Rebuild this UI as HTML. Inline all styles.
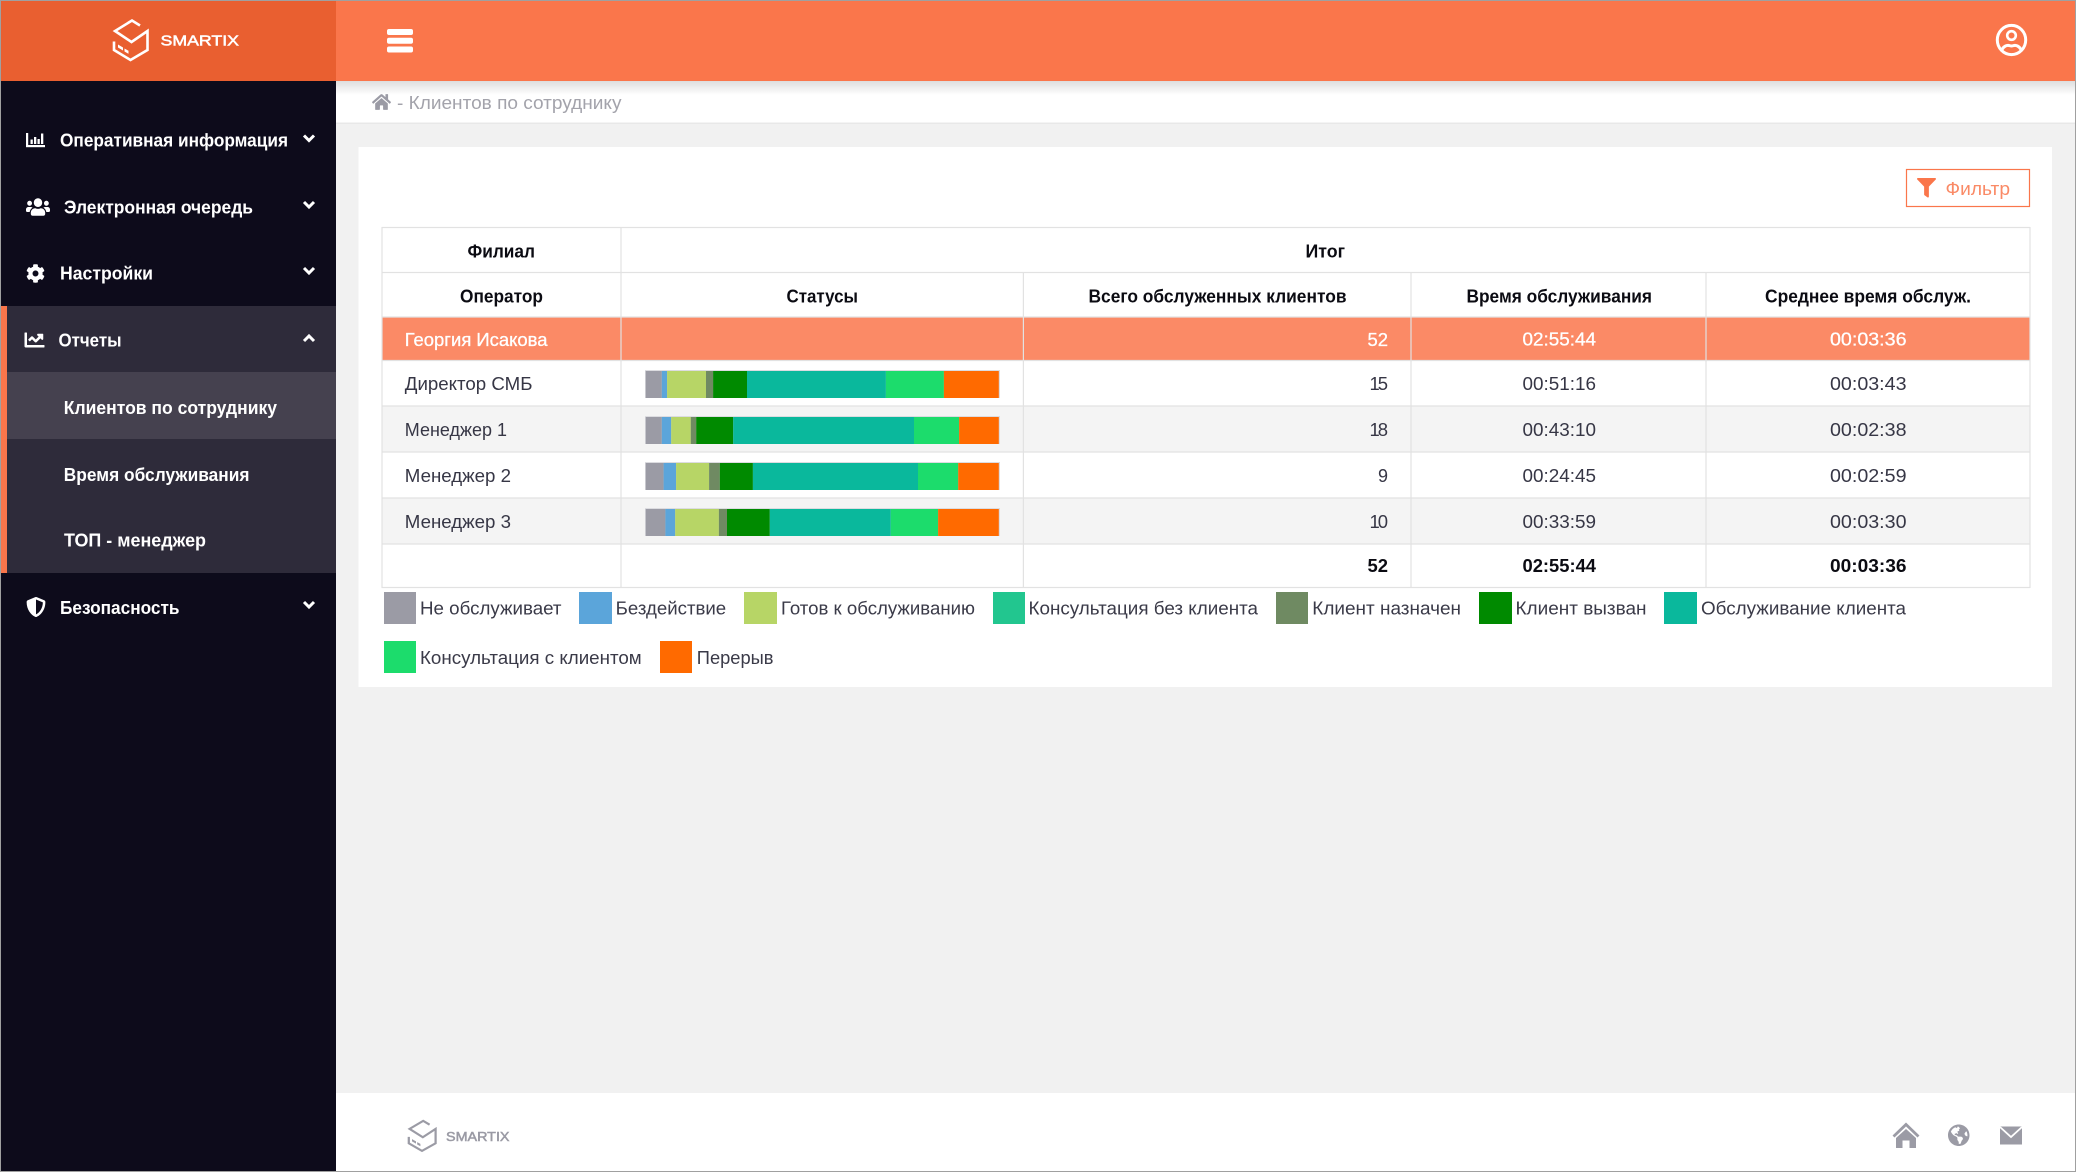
<!DOCTYPE html>
<html lang="ru">
<head>
<meta charset="utf-8">
<title>Клиентов по сотруднику</title>
<style>
html,body{margin:0;padding:0;width:2076px;height:1172px;overflow:hidden;background:#f1f1f1}
svg{display:block}
text{font-family:"Liberation Sans","Noto Sans CJK SC",sans-serif;font-size:18.5px}
.b{font-weight:700}
.w{fill:#fff}
.d{fill:#363645}
.k{fill:#0b0b12}
.l{fill:#3a3a48}
</style>
</head>
<body>
<svg xmlns="http://www.w3.org/2000/svg" width="2076" height="1172" viewBox="0 0 2076 1172">
<defs>
<linearGradient id="sh" x1="0" y1="0" x2="0" y2="1"><stop offset="0" stop-color="#000" stop-opacity=".13"/><stop offset="1" stop-color="#000" stop-opacity="0"/></linearGradient>
</defs>

<!-- page background -->
<rect x="0" y="0" width="2076" height="1172" fill="#f1f1f1"/>

<!-- breadcrumb -->
<rect x="336" y="81" width="1740" height="42" fill="#fff"/>
<rect x="336" y="122.5" width="1740" height="1.5" fill="#e8e8e8"/>
<rect x="336" y="81" width="1740" height="14" fill="url(#sh)"/>
<svg x="372" y="93" width="19" height="18" viewBox="0 0 576 512" preserveAspectRatio="none"><path fill="#9b9ba5" d="M280.37 148.26L96 300.11V464a16 16 0 0 0 16 16l112.06-.29a16 16 0 0 0 15.92-16V368a16 16 0 0 1 16-16h64a16 16 0 0 1 16 16v95.64a16 16 0 0 0 16 16.05L464 480a16 16 0 0 0 16-16V300L295.67 148.26a12.19 12.19 0 0 0-15.3 0zM571.6 251.47L488 182.56V44.05a12 12 0 0 0-12-12h-56a12 12 0 0 0-12 12v72.61L318.47 43a48 48 0 0 0-61 0L4.34 251.47a12 12 0 0 0-1.6 16.9l25.5 31A12 12 0 0 0 45.15 301l235.22-193.74a12.19 12.19 0 0 1 15.3 0L530.9 301a12 12 0 0 0 16.9-1.6l25.5-31a12 12 0 0 0-1.7-16.93z"/></svg>
<text x="397" y="109" textLength="224.5" lengthAdjust="spacingAndGlyphs" fill="#a3a3ab">- Клиентов по сотруднику</text>

<!-- top header -->
<rect x="336" y="0" width="1740" height="81" fill="#fa764b"/>
<rect x="387" y="29" width="26" height="6" rx="2" fill="#fff"/>
<rect x="387" y="37.7" width="26" height="6" rx="2" fill="#fff"/>
<rect x="387" y="46.5" width="26" height="6" rx="2" fill="#fff"/>
<ellipse cx="2011.5" cy="40" rx="14.2" ry="14.6" fill="none" stroke="#fff" stroke-width="3"/>
<circle cx="2011.5" cy="35.5" r="4.3" fill="none" stroke="#fff" stroke-width="2.6"/>
<path d="M2002 49.5c2-3.5 5-4.5 7-4 1.700.6 3.300.6 5 0 2-.5 5 .5 7 4" fill="none" stroke="#fff" stroke-width="3"/>

<!-- sidebar -->
<rect x="0" y="0" width="336" height="1172" fill="#0d0b1b"/>
<rect x="0" y="0" width="336" height="81" fill="#e95f30"/>
<g fill="none" stroke="#fff" stroke-width="2.6">
<path d="M140 25.5L132 20.5L115 31L131.5 42L147.5 31V50L130.5 60L114 50V41.5"/>
</g>
<path d="M118 44.5l5 3v3l-5-3zM124.5 48.5l4 2.300v3l-4-2.300z" fill="#fff"/>
<text x="160.5" y="45.5" textLength="78.5" lengthAdjust="spacingAndGlyphs" fill="#fff" style="font-size:14.5px" stroke="#fff" stroke-width=".5">SMARTIX</text>

<rect x="1" y="306" width="335" height="267" fill="#2e2b3a"/>
<rect x="7" y="372" width="329" height="67" fill="#45414f"/>
<rect x="1" y="306" width="6" height="267" fill="#fa764b"/>

<text class="b w" x="60" y="146.5" textLength="228" lengthAdjust="spacingAndGlyphs">Оперативная информация</text>
<text class="b w" x="64" y="213.5" textLength="189" lengthAdjust="spacingAndGlyphs">Электронная очередь</text>
<text class="b w" x="60" y="279.5" textLength="93" lengthAdjust="spacingAndGlyphs">Настройки</text>
<text class="b w" x="58.5" y="346.5" textLength="63" lengthAdjust="spacingAndGlyphs">Отчеты</text>
<text class="b w" x="63.8" y="414" textLength="213.2" lengthAdjust="spacingAndGlyphs">Клиентов по сотруднику</text>
<text class="b w" x="63.8" y="481" textLength="185.7" lengthAdjust="spacingAndGlyphs">Время обслуживания</text>
<text class="b w" x="64" y="546.5" textLength="142" lengthAdjust="spacingAndGlyphs">ТОП - менеджер</text>
<text class="b w" x="60" y="614" textLength="119.5" lengthAdjust="spacingAndGlyphs">Безопасность</text>

<!-- sidebar icons -->
<g fill="#fff">
<rect x="26" y="133" width="2.2" height="14"/><rect x="26" y="145" width="19" height="2.2"/>
<rect x="30.5" y="139.5" width="2.3" height="4.5"/><rect x="34" y="137" width="2.3" height="7"/><rect x="37.5" y="139" width="2.3" height="5"/><rect x="41" y="133.5" width="2.3" height="10.5"/>
</g>
<svg x="26" y="197" width="24" height="20" viewBox="0 0 640 512" preserveAspectRatio="none"><path fill="#fff" d="M96 224c35.300 0 64-28.700 64-64s-28.700-64-64-64-64 28.700-64 64 28.700 64 64 64zm448 0c35.300 0 64-28.700 64-64s-28.700-64-64-64-64 28.700-64 64 28.700 64 64 64zm32 32h-64c-17.600 0-33.500 7.100-45.100 18.600 40.300 22.100 68.900 62 75.100 109.400h66c17.700 0 32-14.300 32-32v-32c0-35.300-28.700-64-64-64zm-256 0c61.900 0 112-50.100 112-112S381.900 32 320 32 208 82.100 208 144s50.100 112 112 112zm76.800 32h-8.300c-20.800 10-43.900 16-68.500 16s-47.600-6-68.500-16h-8.300C179.600 288 128 339.600 128 403.200V432c0 26.500 21.500 48 48 48h288c26.500 0 48-21.500 48-48v-28.800c0-63.600-51.600-115.200-115.200-115.200zm-223.700-13.400C161.500 263.100 145.600 256 128 256H64c-35.300 0-64 28.700-64 64v32c0 17.700 14.300 32 32 32h65.900c6.300-47.400 34.900-87.300 75.200-109.400z"/></svg>
<svg x="26" y="264" width="19" height="19" viewBox="0 0 512 512"><path fill="#fff" d="M487.400 315.700l-42.600-24.600c4.300-23.200 4.300-47 0-70.200l42.600-24.600c4.900-2.800 7.100-8.600 5.500-14-11.100-35.600-30-67.800-54.700-94.600-3.800-4.100-10-5.100-14.800-2.300L380.800 110c-17.900-15.400-38.500-27.300-60.800-35.100V25.800c0-5.600-3.900-10.500-9.400-11.700-36.700-8.200-74.300-7.800-109.200 0-5.500 1.200-9.400 6.100-9.400 11.700V75c-22.200 7.900-42.800 19.800-60.800 35.100L88.700 85.500c-4.900-2.800-11-1.900-14.800 2.300-24.700 26.700-43.600 58.900-54.700 94.600-1.700 5.400.6 11.200 5.500 14L67.300 221c-4.300 23.200-4.300 47 0 70.200l-42.600 24.600c-4.900 2.800-7.100 8.600-5.500 14 11.100 35.600 30 67.800 54.700 94.600 3.800 4.100 10 5.100 14.800 2.300l42.600-24.600c17.900 15.400 38.500 27.300 60.800 35.100v49.200c0 5.600 3.900 10.500 9.400 11.700 36.700 8.200 74.300 7.800 109.200 0 5.500-1.200 9.400-6.100 9.400-11.700v-49.200c22.200-7.900 42.800-19.800 60.800-35.100l42.600 24.600c4.900 2.800 11 1.900 14.800-2.300 24.700-26.700 43.600-58.900 54.700-94.600 1.500-5.500-.7-11.300-5.600-14.100zM256 336c-44.100 0-80-35.900-80-80s35.900-80 80-80 80 35.900 80 80-35.900 80-80 80z"/></svg>
<svg x="24.5" y="330" width="20" height="20" viewBox="0 0 512 512"><path fill="#fff" d="M496 384H64V80c0-8.840-7.160-16-16-16H16C7.160 64 0 71.160 0 80v336c0 17.670 14.330 32 32 32h464c8.840 0 16-7.160 16-16v-32c0-8.840-7.160-16-16-16zM464 96H345.940c-21.380 0-32.090 25.850-16.970 40.970l32.400 32.400L288 242.750l-73.370-73.370c-12.500-12.500-32.760-12.500-45.250 0l-68.690 68.690c-6.250 6.250-6.250 16.380 0 22.630l22.620 22.620c6.250 6.250 16.380 6.250 22.630 0L192 237.250l73.370 73.370c12.500 12.500 32.760 12.500 45.250 0l96-96 32.400 32.400c15.120 15.120 40.970 4.410 40.970-16.970V112c.01-8.840-7.150-16-16.010-16z"/></svg>
<svg x="26" y="597" width="20" height="20" viewBox="0 0 512 512"><path fill="#fff" d="M466.500 83.700l-192-80a48.150 48.150 0 0 0-36.900 0l-192 80C27.700 91.100 16 108.600 16 128c0 198.500 114.500 335.700 221.500 380.300 11.800 4.900 25.100 4.900 36.900 0C360.100 472.600 496 349.300 496 128c0-19.400-11.700-36.900-29.500-44.300zM256.100 446.300l-.1-381 175.900 73.300c-3.300 151.400-82.100 261.100-175.800 307.700z"/></svg>
<g fill="none" stroke="#fff" stroke-width="3">
<path d="M304 135.5l5 5 5-5"/>
<path d="M304 202l5 5 5-5"/>
<path d="M304 268l5 5 5-5"/>
<path d="M304 341l5-5 5 5"/>
<path d="M304 602l5 5 5-5"/>
</g>

<!-- card -->
<rect x="358.5" y="147" width="1693.5" height="540" fill="#fff"/>

<!-- filter button -->
<rect x="1906.5" y="169.5" width="123" height="37" fill="#fff" stroke="#fa764b" stroke-width="1.2"/>
<svg x="1917" y="178" width="19" height="19.5" viewBox="0 0 512 512" preserveAspectRatio="none"><path fill="#fa764b" d="M487.976 0H24.028C2.710 0-8.047 25.866 7.058 40.971L192 225.941V432c0 7.831 3.821 15.170 10.237 19.662l80 55.980C298.020 518.690 320 507.493 320 487.980V225.941l184.947-184.970C520.021 25.896 509.338 0 487.976 0z"/></svg>
<text x="1945.5" y="195" textLength="64.5" lengthAdjust="spacingAndGlyphs" fill="#fa8a66">Фильтр</text>

<!-- table backgrounds -->
<rect x="382" y="317" width="1648" height="43" fill="#fb8a66"/>
<rect x="382" y="406" width="1648" height="46" fill="#f4f4f4"/>
<rect x="382" y="498" width="1648" height="46" fill="#f4f4f4"/>

<!-- table lines -->
<g stroke="#e2e2e2" stroke-width="1.2" fill="none">
<path d="M381.7 227.5H2030M381.7 272.5H2030M381.7 317H2030M381.7 360.5H2030M381.7 406H2030M381.7 452H2030M381.7 498H2030M381.7 544H2030M381.7 587.5H2030"/>
<path d="M382 227V588M621 227V588M1023.4 272V588M1411 272V588M1706 272V588M2030 227V588"/>
</g>

<!-- table heads -->
<text class="b k" x="467.5" y="257.5" textLength="67.5" lengthAdjust="spacingAndGlyphs">Филиал</text>
<text class="b k" x="1305.5" y="257.5" textLength="39.5" lengthAdjust="spacingAndGlyphs">Итог</text>
<text class="b k" x="460" y="302.5" textLength="83" lengthAdjust="spacingAndGlyphs">Оператор</text>
<text class="b k" x="786.5" y="302.5" textLength="71.5" lengthAdjust="spacingAndGlyphs">Статусы</text>
<text class="b k" x="1088.5" y="302.5" textLength="258" lengthAdjust="spacingAndGlyphs">Всего обслуженных клиентов</text>
<text class="b k" x="1466.5" y="302.5" textLength="185.5" lengthAdjust="spacingAndGlyphs">Время обслуживания</text>
<text class="b k" x="1765" y="302.5" textLength="206" lengthAdjust="spacingAndGlyphs">Среднее время обслуж.</text>

<!-- summary row -->
<text class="w" x="404.8" y="346" textLength="142.7" lengthAdjust="spacingAndGlyphs" stroke="#fff" stroke-width=".3">Георгия Исакова</text>
<text class="w" x="1367.5" y="346" textLength="20.5" lengthAdjust="spacingAndGlyphs" stroke="#fff" stroke-width=".3">52</text>
<text class="w" x="1522.5" y="345.7" textLength="73.5" lengthAdjust="spacingAndGlyphs" stroke="#fff" stroke-width=".3">02:55:44</text>
<text class="w" x="1830" y="345.7" textLength="76.5" lengthAdjust="spacingAndGlyphs" stroke="#fff" stroke-width=".3">00:03:36</text>

<!-- row 1 -->
<text class="d" x="404.8" y="390" textLength="127.7" lengthAdjust="spacingAndGlyphs">Директор СМБ</text>
<text class="d" x="1369.5" y="390" textLength="18.5" lengthAdjust="spacing">15</text>
<text class="d" x="1522.5" y="390" textLength="73.5" lengthAdjust="spacingAndGlyphs">00:51:16</text>
<text class="d" x="1830" y="390" textLength="76.5" lengthAdjust="spacingAndGlyphs">00:03:43</text>
<!-- row 2 -->
<text class="d" x="404.8" y="436" textLength="102.2" lengthAdjust="spacingAndGlyphs">Менеджер 1</text>
<text class="d" x="1369.5" y="436" textLength="18.5" lengthAdjust="spacing">18</text>
<text class="d" x="1522.5" y="436" textLength="73.5" lengthAdjust="spacingAndGlyphs">00:43:10</text>
<text class="d" x="1830" y="436" textLength="76.5" lengthAdjust="spacingAndGlyphs">00:02:38</text>
<!-- row 3 -->
<text class="d" x="404.8" y="482" textLength="106.2" lengthAdjust="spacingAndGlyphs">Менеджер 2</text>
<text class="d" x="1378" y="482" textLength="10" lengthAdjust="spacingAndGlyphs">9</text>
<text class="d" x="1522.5" y="482" textLength="73.5" lengthAdjust="spacingAndGlyphs">00:24:45</text>
<text class="d" x="1830" y="482" textLength="76.5" lengthAdjust="spacingAndGlyphs">00:02:59</text>
<!-- row 4 -->
<text class="d" x="404.8" y="528" textLength="106.2" lengthAdjust="spacingAndGlyphs">Менеджер 3</text>
<text class="d" x="1369.5" y="528" textLength="18.5" lengthAdjust="spacing">10</text>
<text class="d" x="1522.5" y="528" textLength="73.5" lengthAdjust="spacingAndGlyphs">00:33:59</text>
<text class="d" x="1830" y="528" textLength="76.5" lengthAdjust="spacingAndGlyphs">00:03:30</text>
<!-- totals -->
<text class="b k" x="1367.5" y="572" textLength="20.5" lengthAdjust="spacingAndGlyphs">52</text>
<text class="b k" x="1522.5" y="572" textLength="73.5" lengthAdjust="spacingAndGlyphs">02:55:44</text>
<text class="b k" x="1830" y="572" textLength="76.5" lengthAdjust="spacingAndGlyphs">00:03:36</text>

<!-- status bars -->
<g fill="#dcdce0">
<rect x="645" y="370" width="355" height="28"/>
<rect x="645" y="416" width="355" height="28"/>
<rect x="645" y="462" width="355" height="28"/>
<rect x="645" y="508" width="355" height="28"/>
</g>
<g>
<rect x="645.7" y="371" width="16.1" height="27" fill="#9b9ba5"/><rect x="661.8" y="371" width="5.3" height="27" fill="#5ba5da"/><rect x="667.1" y="371" width="38.9" height="27" fill="#b7d566"/><rect x="706" y="371" width="7.1" height="27" fill="#6f8a62"/><rect x="713.1" y="371" width="33.9" height="27" fill="#008a00"/><rect x="747" y="371" width="138.9" height="27" fill="#0ab89c"/><rect x="885.9" y="371" width="58" height="27" fill="#1cdc6c"/><rect x="943.9" y="371" width="54.9" height="27" fill="#ff6a00"/>
<rect x="645.7" y="417" width="16.1" height="27" fill="#9b9ba5"/><rect x="661.8" y="417" width="9.4" height="27" fill="#5ba5da"/><rect x="671.2" y="417" width="19.6" height="27" fill="#b7d566"/><rect x="690.8" y="417" width="5.4" height="27" fill="#6f8a62"/><rect x="696.2" y="417" width="37" height="27" fill="#008a00"/><rect x="733.2" y="417" width="180.8" height="27" fill="#0ab89c"/><rect x="914" y="417" width="45.1" height="27" fill="#1cdc6c"/><rect x="959.1" y="417" width="39.7" height="27" fill="#ff6a00"/>
<rect x="645.7" y="463" width="17.9" height="27" fill="#9b9ba5"/><rect x="663.6" y="463" width="12.5" height="27" fill="#5ba5da"/><rect x="676.1" y="463" width="33" height="27" fill="#b7d566"/><rect x="709.1" y="463" width="10.7" height="27" fill="#6f8a62"/><rect x="719.8" y="463" width="33.1" height="27" fill="#008a00"/><rect x="752.9" y="463" width="165.1" height="27" fill="#0ab89c"/><rect x="918" y="463" width="40.2" height="27" fill="#1cdc6c"/><rect x="958.2" y="463" width="40.6" height="27" fill="#ff6a00"/>
<rect x="645.7" y="509" width="19.7" height="27" fill="#9b9ba5"/><rect x="665.4" y="509" width="9.8" height="27" fill="#5ba5da"/><rect x="675.2" y="509" width="43.7" height="27" fill="#b7d566"/><rect x="718.9" y="509" width="8.1" height="27" fill="#6f8a62"/><rect x="727" y="509" width="42.8" height="27" fill="#008a00"/><rect x="769.8" y="509" width="121" height="27" fill="#0ab89c"/><rect x="890.8" y="509" width="47.3" height="27" fill="#1cdc6c"/><rect x="938.1" y="509" width="60.7" height="27" fill="#ff6a00"/>
</g>

<!-- legend -->
<rect x="384" y="592" width="32" height="32" fill="#9b9ba5"/>
<rect x="579" y="592" width="33" height="32" fill="#5ba5da"/>
<rect x="744" y="592" width="33" height="32" fill="#b7d566"/>
<rect x="993" y="592" width="32" height="32" fill="#22c68f"/>
<rect x="1276" y="592" width="32" height="32" fill="#6f8a62"/>
<rect x="1479" y="592" width="33" height="32" fill="#008a00"/>
<rect x="1664" y="592" width="33" height="32" fill="#0ab89c"/>
<rect x="384" y="641" width="32" height="32" fill="#1cdc6c"/>
<rect x="660" y="641" width="32" height="32" fill="#ff6a00"/>
<text class="l" x="420" y="614.5" textLength="141.5" lengthAdjust="spacingAndGlyphs">Не обслуживает</text>
<text class="l" x="615.7" y="614.5" textLength="110.5" lengthAdjust="spacingAndGlyphs">Бездействие</text>
<text class="l" x="781" y="614.5" textLength="194" lengthAdjust="spacingAndGlyphs">Готов к обслуживанию</text>
<text class="l" x="1028.5" y="614.5" textLength="229.5" lengthAdjust="spacingAndGlyphs">Консультация без клиента</text>
<text class="l" x="1312.3" y="614.5" textLength="148.7" lengthAdjust="spacingAndGlyphs">Клиент назначен</text>
<text class="l" x="1515.5" y="614.5" textLength="131" lengthAdjust="spacingAndGlyphs">Клиент вызван</text>
<text class="l" x="1701" y="614.5" textLength="205" lengthAdjust="spacingAndGlyphs">Обслуживание клиента</text>
<text class="l" x="420" y="664" textLength="221.7" lengthAdjust="spacingAndGlyphs">Консультация с клиентом</text>
<text class="l" x="696.8" y="664" textLength="76.7" lengthAdjust="spacingAndGlyphs">Перерыв</text>

<!-- footer -->
<rect x="336" y="1093" width="1740" height="79" fill="#fff"/>
<g transform="translate(408 1120.5) scale(.8 .76) translate(-113 -20)">
<path d="M140 25.5L132 20.5L115 31L131.5 42L147.5 31V50L130.5 60L114 50V41.5" fill="none" stroke="#9b9ba5" stroke-width="2.8"/>
<path d="M118 44.5l5 3v3l-5-3zM124.5 48.5l4 2.300v3l-4-2.300z" fill="#9b9ba5"/>
</g>
<text x="446" y="1141" textLength="63.5" lengthAdjust="spacingAndGlyphs" fill="#9b9ba5" style="font-size:12.5px" stroke="#9b9ba5" stroke-width=".5">SMARTIX</text>
<path d="M1893.5 1136.5L1906 1124.5L1918.500 1136.5" fill="none" stroke="#9b9ba5" stroke-width="2.8"/>
<path d="M1906 1129L1916 1138V1148H1909.5V1140.5H1902.5V1148H1896V1138Z" fill="#9b9ba5"/>
<svg x="1948" y="1124.5" width="21.5" height="21.5" viewBox="0 8 496 496"><path fill="#9b9ba5" d="M248 8C111.030 8 0 119.030 0 256s111.030 248 248 248 248-111.030 248-248S384.970 8 248 8zm82.290 357.600c-3.900 3.880-7.990 7.950-11.310 11.280-2.990 3-5.100 6.700-6.170 10.710-1.510 5.660-2.730 11.380-4.770 16.870l-17.390 46.850c-13.760 3-28 4.690-42.650 4.690v-27.380c1.690-12.620-7.640-36.260-22.630-51.250-6-6-9.370-14.140-9.370-22.630v-32.010c0-11.640-6.270-22.340-16.460-27.970-14.370-7.950-34.810-19.060-48.810-26.110-11.480-5.780-22.100-13.140-31.650-21.750l-.8-.72a114.792 114.792 0 0 1-18.060-20.740c-9.380-13.770-24.660-36.420-34.590-51.140 20.470-45.500 57.360-82.040 103.200-101.890l24.010 12.010C203.480 89.740 216 82.010 216 70.110v-11.300c7.990-1.290 16.120-2.110 24.420-2.420l28.300 28.300c6.250 6.250 6.250 16.380 0 22.630L264 112l-10.340 10.340c-3.120 3.120-3.120 8.190 0 11.310l4.690 4.690c3.120 3.120 3.120 8.190 0 11.310l-8 8a8.008 8.008 0 0 1-5.670 2.340h-8.990c-2.080 0-4.080.81-5.580 2.270l-9.920 9.650a8.008 8.008 0 0 0-1.580 9.310l15.590 31.190c2.660 5.320-1.210 11.580-7.150 11.580h-5.640c-1.930 0-3.790-.7-5.240-1.960l-9.280-8.060a16.017 16.017 0 0 0-15.550-3.100l-31.170 10.390a11.950 11.950 0 0 0-8.170 11.340c0 4.530 2.560 8.660 6.610 10.690l11.080 5.540c9.410 4.710 19.790 7.160 30.310 7.160s22.590 27.290 32 32h66.750c8.490 0 16.620 3.370 22.630 9.370l13.690 13.690a30.503 30.503 0 0 1 8.930 21.570 46.536 46.536 0 0 1-13.720 32.980zM417 274.250c-5.790-1.450-10.840-5-14.150-9.970l-17.980-26.970a23.970 23.970 0 0 1 0-26.620l19.590-29.380c2.320-3.470 5.500-6.290 9.240-8.150l12.980-6.490C440.200 193.590 448 223.870 448 256c0 8.670-.74 17.160-1.820 25.540L417 274.250z"/></svg>
<rect x="2000" y="1126.5" width="22" height="18" fill="#9b9ba5"/>
<path d="M2000 1127l11 10 11-10" fill="none" stroke="#fff" stroke-width="1.8"/>

<!-- window border -->
<rect x="0" y="0" width="2076" height="1" fill="#a0a0a0"/>
<rect x="0" y="0" width="1" height="1172" fill="#a0a0a0"/>
<rect x="2075" y="0" width="1" height="1172" fill="#a0a0a0"/>
<rect x="0" y="1171" width="2076" height="1" fill="#a0a0a0"/>
</svg>
</body>
</html>
